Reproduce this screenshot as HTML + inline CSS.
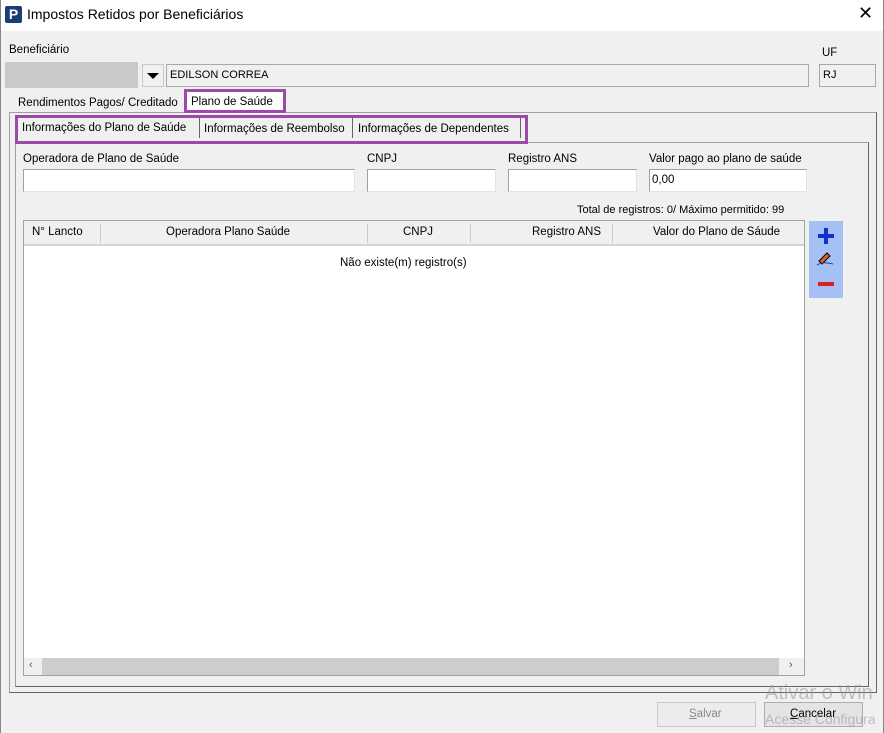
<!DOCTYPE html>
<html><head><meta charset="utf-8"><style>
*{margin:0;padding:0;box-sizing:border-box}
body{width:884px;height:733px;background:#f0f0f0;font-family:"Liberation Sans",sans-serif;font-size:11.5px;color:#000;position:relative;overflow:hidden}
.a{position:absolute}
.inp{position:absolute;background:#fff;border:1px solid #a0a0a0;border-right-color:#e3e3e3;border-bottom-color:#e3e3e3}
.t{position:absolute;white-space:nowrap}
.pur{position:absolute;border:3px solid #9b4aa8}
</style></head><body>
<div class="a" style="left:0;top:0;width:884px;height:31px;background:#fff"></div>
<div class="a" style="left:0;top:0;width:1px;height:733px;background:#888"></div>
<div class="a" style="left:883px;top:0;width:1px;height:733px;background:#888"></div>
<div class="a" style="left:5px;top:6px;width:17px;height:17px;background:#1a3e74;border-radius:2px;color:#fff;font-weight:bold;font-size:14px;line-height:17px;text-align:center">P</div>
<div class="t" style="left:27px;top:6px;font-size:14px">Impostos Retidos por Beneficiários</div>
<div class="t" style="left:858px;top:3px;font-size:18px">✕</div>

<div class="t" style="left:9px;top:44px">Beneficiário</div>
<div class="t" style="left:822px;top:47px">UF</div>
<div class="a" style="left:5px;top:62px;width:133px;height:26px;background:#c9c9c9"></div>
<div class="a" style="left:142px;top:64px;width:22px;height:23px;background:#f0f0f0;border:1px solid #c8c8c8"></div>
<div class="a" style="left:147px;top:73px;width:0;height:0;border-left:6px solid transparent;border-right:6px solid transparent;border-top:6px solid #000"></div>
<div class="a" style="left:166px;top:64px;width:643px;height:23px;border:1px solid #a8a8a8"></div>
<div class="t" style="left:170px;top:69px;font-size:11px">EDILSON CORREA</div>
<div class="a" style="left:819px;top:64px;width:57px;height:23px;border:1px solid #a8a8a8"></div>
<div class="t" style="left:823px;top:69px;font-size:11px">RJ</div>

<div class="t" style="left:18px;top:97px">Rendimentos Pagos/ Creditado</div>
<div class="a" style="left:9px;top:112px;width:868px;height:581px;border:1px solid #a0a0a0;border-right-color:#666;border-bottom-color:#666"></div>
<div class="a" style="left:185px;top:90px;width:100px;height:24px;background:#fff"></div>
<div class="pur" style="left:184px;top:89px;width:102px;height:24px"></div>
<div class="t" style="left:191px;top:96px">Plano de Saúde</div>

<div class="a" style="left:15px;top:142px;width:854px;height:545px;border:1px solid #a0a0a0;border-right-color:#666;border-bottom-color:#666"></div>
<div class="a" style="left:199px;top:118px;width:1px;height:20px;background:#666"></div>
<div class="a" style="left:352px;top:118px;width:1px;height:20px;background:#666"></div>
<div class="a" style="left:520px;top:118px;width:1px;height:20px;background:#666"></div>
<div class="pur" style="left:15px;top:115px;width:513px;height:29px"></div>
<div class="t" style="left:22px;top:122px">Informações do Plano de Saúde</div>
<div class="t" style="left:204px;top:123px">Informações de Reembolso</div>
<div class="t" style="left:358px;top:123px">Informações de Dependentes</div>

<div class="t" style="left:23px;top:153px">Operadora de Plano de Saúde</div>
<div class="t" style="left:367px;top:153px">CNPJ</div>
<div class="t" style="left:508px;top:153px">Registro ANS</div>
<div class="t" style="left:649px;top:153px">Valor pago ao plano de saúde</div>
<div class="inp" style="left:23px;top:169px;width:332px;height:23px"></div>
<div class="inp" style="left:367px;top:169px;width:129px;height:23px"></div>
<div class="inp" style="left:508px;top:169px;width:129px;height:23px"></div>
<div class="inp" style="left:649px;top:169px;width:158px;height:23px"></div>
<div class="t" style="left:652px;top:174px">0,00</div>
<div class="t" style="left:577px;top:204px;font-size:11px">Total de registros: 0/ Máximo permitido: 99</div>

<div class="a" style="left:23px;top:220px;width:782px;height:456px;background:#fff;border:1px solid #a0a0a0"></div>
<div class="a" style="left:24px;top:221px;width:780px;height:25px;background:#f0f0f0;border-bottom:2px solid #d4d4d4"></div>
<div class="a" style="left:100px;top:224px;width:1px;height:19px;background:#ccc"></div>
<div class="a" style="left:367px;top:224px;width:1px;height:19px;background:#ccc"></div>
<div class="a" style="left:470px;top:224px;width:1px;height:19px;background:#ccc"></div>
<div class="a" style="left:612px;top:224px;width:1px;height:19px;background:#ccc"></div>
<div class="t" style="left:32px;top:226px">N° Lancto</div>
<div class="t" style="left:166px;top:226px">Operadora Plano Saúde</div>
<div class="t" style="left:403px;top:226px">CNPJ</div>
<div class="t" style="left:532px;top:226px">Registro ANS</div>
<div class="t" style="left:653px;top:226px">Valor do Plano de Sáude</div>
<div class="t" style="left:340px;top:257px">Não existe(m) registro(s)</div>
<div class="a" style="left:24px;top:658px;width:780px;height:17px;background:#f0f0f0"></div>
<div class="a" style="left:42px;top:658px;width:737px;height:17px;background:#cdcdcd"></div>
<div class="t" style="left:29px;top:659px;font-size:11px;color:#555">‹</div>
<div class="t" style="left:789px;top:659px;font-size:11px;color:#555">›</div>

<div class="a" style="left:809px;top:221px;width:34px;height:77px;background:#a4c0f4"></div>
<div class="a" style="left:818px;top:234px;width:16px;height:4px;background:#1030c8"></div>
<div class="a" style="left:824px;top:228px;width:4px;height:16px;background:#1030c8"></div>
<svg class="a" style="left:815px;top:250px" width="20" height="16"><path d="M4 11 L12 3 L15 6 L7 14 Z" fill="#e06020" stroke="#000" stroke-width="1"/><path d="M2 15 Q8 11 18 14" stroke="#2040a0" fill="none"/></svg>
<div class="a" style="left:818px;top:282px;width:16px;height:4px;background:#d82020"></div>

<div class="a" style="left:657px;top:702px;width:99px;height:25px;border:1px solid #c8c8c8;background:#ececec"></div>
<div class="t" style="left:689px;top:708px;color:#8a8a8a"><u>S</u>alvar</div>
<div class="a" style="left:764px;top:702px;width:99px;height:25px;border:1px solid #adadad;background:#e4e4e4"></div>
<div class="t" style="left:790px;top:708px"><u>C</u>ancelar</div>
<div class="t" style="left:765px;top:682px;font-size:20px;color:rgba(150,150,150,.55)">Ativar o Win</div>
<div class="t" style="left:765px;top:711px;font-size:14px;color:rgba(150,150,150,.55)">Acesse Configura</div>
</body></html>
